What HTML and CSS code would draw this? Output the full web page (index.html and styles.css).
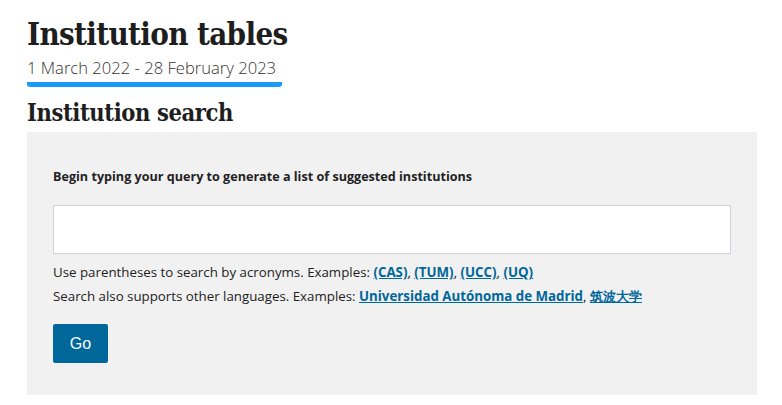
FILE: index.html
```html
<!DOCTYPE html>
<html lang="en">
<head>
<meta charset="utf-8">
<title>Institution tables</title>
<link rel="stylesheet" href="styles.css">
</head>
<body>
<main class="page">
  <header class="intro">
    <h1 class="title">Institution tables</h1>
    <p class="period">1 March 2022 - 28 February 2023</p>
  </header>
  <h2 class="subtitle">Institution search</h2>
  <section class="search">
    <label class="label" for="q">Begin typing your query to generate a list of suggested institutions</label>
    <input class="input" id="q" type="text">
    <p class="hint">Use parentheses to search by acronyms. Examples: <a href="#">(CAS)</a>, <a href="#">(TUM)</a>, <a href="#">(UCC)</a>, <a href="#">(UQ)</a></p>
    <p class="hint">Search also supports other languages. Examples: <a href="#">Universidad Autónoma de Madrid</a>, <a href="#" lang="ja">筑波大学</a></p>
    <button class="go" type="button">Go</button>
  </section>
</main>
</body>
</html>
```
FILE: styles.css
```css
* { box-sizing: border-box; }
html, body { margin: 0; padding: 0; background: #fff; }
body { font-family: "Open Sans", "Noto Sans", sans-serif; color: #222; }
.page { padding: 14px 25px 0 27px; }
.intro { display: flex; flex-direction: column; align-items: flex-start; }
.title {
  margin: 0;
  font-family: "DejaVu Serif Condensed", "DejaVu Serif", serif;
  font-stretch: condensed;
  font-weight: 700;
  font-size: 31px;
  line-height: 40px;
  letter-spacing: -0.65px;
  color: #1e1e1e;
}
.period {
  margin: 2px 0 0;
  font-size: 16.6px;
  line-height: 23px;
  font-weight: 300;
  color: #333;
  padding: 0 6px 3px 0;
  border-bottom: 5px solid #1a9bfc;
  border-radius: 0 0 3px 3px;
}
.subtitle {
  margin: 11px 0 4px;
  font-family: "DejaVu Serif Condensed", "DejaVu Serif", serif;
  font-stretch: condensed;
  font-weight: 700;
  font-size: 23.5px;
  line-height: 30px;
  letter-spacing: -0.4px;
  color: #1e1e1e;
}
.search {
  background: #f1f1f1;
  padding: 36px 26px 32px 26px;
  display: flex;
  flex-direction: column;
  align-items: flex-start;
}
.label {
  font-size: 12.6px;
  font-weight: 700;
  line-height: 18px;
  color: #222;
  margin-bottom: 19px;
}
.input {
  width: 100%;
  height: 49px;
  border: 1px solid #d0d3d8;
  background: #fff;
  margin: 0 0 6px;
}
.hint {
  margin: 0;
  font-size: 13.3px;
  line-height: 24px;
  color: #222;
}
.hint a { color: #00679a; font-weight: 700; }
.go {
  margin-top: 16px;
  width: 55px;
  height: 39px;
  border: 0;
  border-radius: 2px;
  background: #00679a;
  color: #fff;
  font-family: "Liberation Sans", Arial, sans-serif;
  font-size: 16px;
}
```
